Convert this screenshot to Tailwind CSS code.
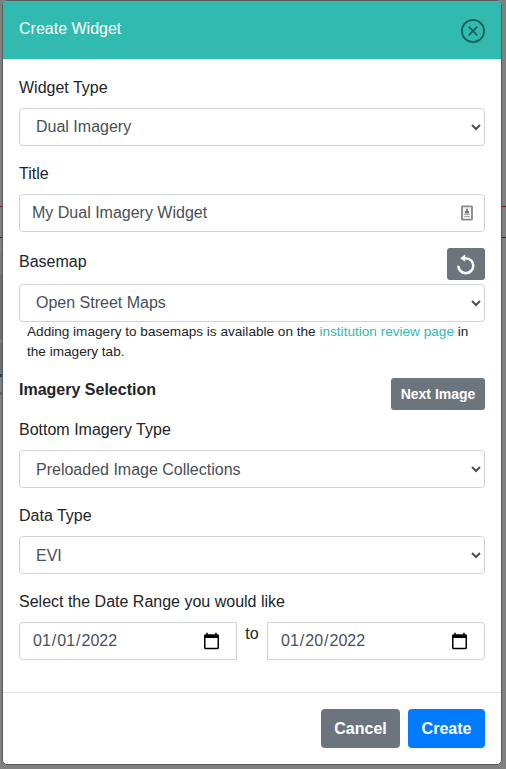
<!DOCTYPE html>
<html lang="en">
<head>
<meta charset="utf-8">
<title>Create Widget</title>
<script src="https://cdn.jsdelivr.net/npm/@tailwindcss/browser@4"></script>
</head>
<body class="relative h-[769px] overflow-hidden bg-[#808080] font-['Liberation_Sans',Arial,sans-serif] text-base leading-6 text-[#212529]">
<!-- dimmed page behind the dialog -->
<div class="absolute inset-x-0 top-[206px] h-px bg-[#7c0b0b]"></div>
<div class="absolute inset-x-0 top-[237px] h-px bg-[#7c0b0b]"></div>
<div class="absolute left-0 top-[254px] h-[20px] w-2 bg-[#7b7974]"></div>
<div class="absolute left-0 top-[274px] h-[66px] w-2 bg-[#6f7070]"></div>
<div class="absolute left-0 top-[343px] h-[30px] w-2 bg-[#6f7070]"></div>
<div class="absolute left-0 top-[374px] h-[3px] w-2 bg-[#17496f]"></div>
<div class="absolute left-0 top-[392px] h-[3px] w-2 bg-[#666]"></div>

<div class="relative ml-[2px] flex h-[765px] w-[500px] flex-col overflow-hidden rounded-[5px] border border-[#595959] bg-white">
  <header class="flex h-[59px] shrink-0 items-start justify-between border-b border-[#dee2e6] bg-[#31bab0] pl-4 pr-[15px] pt-4 text-white">
    <h5>Create Widget</h5>
    <svg class="mt-px size-[26px]" viewBox="0 0 26 26" fill="none" stroke="#195e59">
      <circle cx="13" cy="13" r="11.1" stroke-width="1.8"/>
      <path d="M8.7 8.7l8.6 8.6M17.3 8.7l-8.6 8.6" stroke-width="1.7"/>
    </svg>
  </header>

  <main class="flex grow flex-col px-4 pt-4">
    <label class="mb-2">Widget Type</label>
    <select class="mb-4 h-[38px] w-full rounded border border-[#ced4da] bg-white px-3 pb-[7px] pt-[5px] text-[#495057]"><option>Dual Imagery</option></select>

    <label class="mb-2">Title</label>
    <div class="mb-4 flex h-[38px] items-center justify-between rounded border border-[#ced4da] pl-3 pr-[11px] text-[#495057]">
      <span class="-mt-px">My Dual Imagery Widget</span>
      <svg class="h-[16px] w-[12px]" viewBox="0 0 12 16">
        <rect x="1" y="1.4" width="10" height="13.2" rx=".4" fill="#f4f4f4" stroke="#8c8c8c" stroke-width="1.9"/>
        <path d="M5.2 3.4h1.6v2.6h1.2v2.4H4V6h1.2z" fill="#777"/>
        <path d="M3.2 9h5.6v1H3.2zM3.2 11h5.6v1H3.2z" fill="#aaa"/>
      </svg>
    </div>

    <div class="mb-1 flex h-8 items-start justify-between">
      <label class="pt-[2px]">Basemap</label>
      <button class="flex h-8 w-[38px] items-center justify-center rounded-[3px] bg-[#6c757d]">
        <svg class="size-5 overflow-visible" viewBox="0 0 20 20" fill="none">
          <path d="M2.3 11.7a7.5 7.5 0 1 0 7.5-7.5H8" stroke="#fff" stroke-width="2.5"/>
          <path d="M4.1 4.3L9.2 .6v7.2z" fill="#fff"/>
        </svg>
      </button>
    </div>
    <select class="h-[38px] w-full rounded border border-[#ced4da] bg-white px-3 pb-[7px] pt-[5px] text-[#495057]"><option>Open Street Maps</option></select>
    <p class="mb-4 h-10 px-2 text-[13.6px] leading-5">Adding imagery to basemaps is available on the <a class="text-[#31bab0]">institution review page</a> in the imagery tab.</p>

    <div class="mb-2 flex h-8 items-start justify-between">
      <h3 class="font-bold">Imagery Selection</h3>
      <button class="h-8 w-[94px] rounded-[3px] bg-[#6c757d] text-sm font-bold text-white">Next Image</button>
    </div>

    <label class="mb-2">Bottom Imagery Type</label>
    <select class="mb-4 h-[38px] w-full rounded border border-[#ced4da] bg-white px-3 py-1.5 text-[#495057]"><option>Preloaded Image Collections</option></select>

    <label class="mb-2">Data Type</label>
    <select class="mb-4 h-[38px] w-full rounded border border-[#ced4da] bg-white px-3 py-1.5 text-[#495057]"><option>EVI</option></select>

    <label class="mb-2">Select the Date Range you would like</label>
    <div class="flex">
      <input type="date" value="2022-01-01" class="h-[38px] w-[218px] rounded-l border border-[#ced4da] bg-white px-3 py-1.5 text-[#495057] [&::-webkit-calendar-picker-indicator]:size-[19px] [&::-webkit-calendar-picker-indicator]:p-0 [&::-webkit-calendar-picker-indicator]:mr-[3px]">
      <span class="w-[30px] text-center">to</span>
      <input type="date" value="2022-01-20" class="h-[38px] w-[218px] rounded-r border border-[#ced4da] bg-white px-3 py-1.5 text-[#495057] [&::-webkit-calendar-picker-indicator]:size-[19px] [&::-webkit-calendar-picker-indicator]:p-0 [&::-webkit-calendar-picker-indicator]:mr-[3px]">
    </div>
  </main>

  <footer class="flex h-[72px] shrink-0 justify-end gap-2 border-t border-[#dee2e6] px-4 pt-4 font-bold text-white">
    <button class="h-[39px] w-[79px] rounded bg-[#6c757d]">Cancel</button>
    <button class="h-[39px] w-[77px] rounded bg-[#007bff]">Create</button>
  </footer>
</div>
</body>
</html>
